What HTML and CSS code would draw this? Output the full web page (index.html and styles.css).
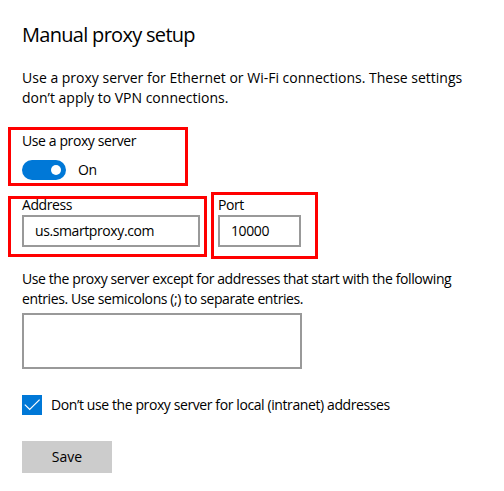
FILE: index.html
```html
<!DOCTYPE html>
<html lang="en">
<head>
<meta charset="utf-8">
<title>Manual proxy setup</title>
<link rel="stylesheet" href="styles.css">
</head>
<body>
<main class="page">
  <h1 class="title">Manual proxy setup</h1>
  <p class="desc desc-intro">Use a proxy server for Ethernet or Wi-Fi connections. These settings<br>don’t apply to VPN connections.</p>

  <div class="mark mark-toggle">
    <div class="label">Use a proxy server</div>
    <div class="toggle-row">
      <span class="toggle"><span class="knob"></span></span>
      <span class="toggle-text">On</span>
    </div>
  </div>

  <div class="fields">
    <div class="mark mark-address">
      <div class="field-label">Address</div>
      <div class="input input-address">us.smartproxy.com</div>
    </div>
    <div class="mark mark-port">
      <div class="field-label">Port</div>
      <div class="input input-port">10000</div>
    </div>
  </div>

  <p class="desc desc-exceptions">Use the proxy server except for addresses that start with the following<br>entries. Use semicolons (;) to separate entries.</p>
  <div class="textarea"></div>

  <div class="check-row">
    <span class="checkbox">
      <svg width="20" height="20" viewBox="0 0 20 20"><path d="M2.8 9.6 L7.7 14.5 L17.6 4.6" fill="none" stroke="#fff" stroke-width="1.2"/></svg>
    </span>
    <span class="check-text">Don’t use the proxy server for local (intranet) addresses</span>
  </div>

  <button class="save" type="button">Save</button>
</main>
</body>
</html>
```

FILE: styles.css
```css
* { box-sizing: border-box; }

html, body {
  margin: 0;
  background: #fff;
}

body {
  font-family: "Open Sans", "Noto Sans", sans-serif;
  font-size: 14px;
  line-height: 20px;
  letter-spacing: -0.4px;
  color: #000;
}

.page {
  padding-left: 22px;
  display: flex;
  flex-direction: column;
  align-items: flex-start;
}

.title {
  margin: 21px 0 0;
  font-size: 20px;
  line-height: 28px;
  font-weight: 400;
  letter-spacing: -0.7px;
}

.desc {
  margin: 19px 0 0;
}

.desc-intro {
  letter-spacing: 0;
}

.mark {
  border: 3px solid #f00;
}

.mark-toggle {
  margin: 19px 0 0 -14px;
  width: 180px;
  height: 59px;
  padding: 1px 0 0 11px;
}

.toggle-row {
  margin-top: 9px;
  display: flex;
  align-items: center;
  gap: 12px;
  height: 20px;
}

.toggle {
  width: 44px;
  height: 20px;
  border-radius: 10px;
  background: #0078d7;
  display: flex;
  align-items: center;
  justify-content: flex-end;
  padding-right: 5px;
}

.knob {
  width: 10px;
  height: 10px;
  border-radius: 50%;
  background: #fff;
}

.fields {
  margin: 6px 0 0 -14px;
  display: flex;
  align-items: flex-start;
  gap: 4px;
}

.mark-address {
  margin-top: 4px;
  width: 199px;
  height: 61px;
  padding: 0 4px 0 11px;
}

.mark-port {
  width: 107px;
  height: 67px;
  padding: 4px 14px 0 4px;
}

.field-label {
  line-height: 12px;
  margin-bottom: 4px;
}

.input {
  height: 32px;
  border: 2px solid #999;
  padding: 0 0 0 11px;
  line-height: 27px;
}

.input-address { width: 178px; }
.input-port { width: 83px; }

.desc-exceptions {
  margin-top: 10px;
}

.textarea {
  margin-top: 4px;
  width: 280px;
  height: 56px;
  border: 2px solid #999;
}

.check-row {
  margin-top: 26px;
  display: flex;
  align-items: center;
  gap: 9px;
  height: 20px;
}

.checkbox {
  width: 20px;
  height: 20px;
  background: #0078d7;
  display: block;
}

.checkbox svg { display: block; }

.save {
  margin-top: 26px;
  width: 90px;
  height: 32px;
  border: 0;
  background: #ccc;
  font: inherit;
  color: #000;
  padding: 0;
}
```
